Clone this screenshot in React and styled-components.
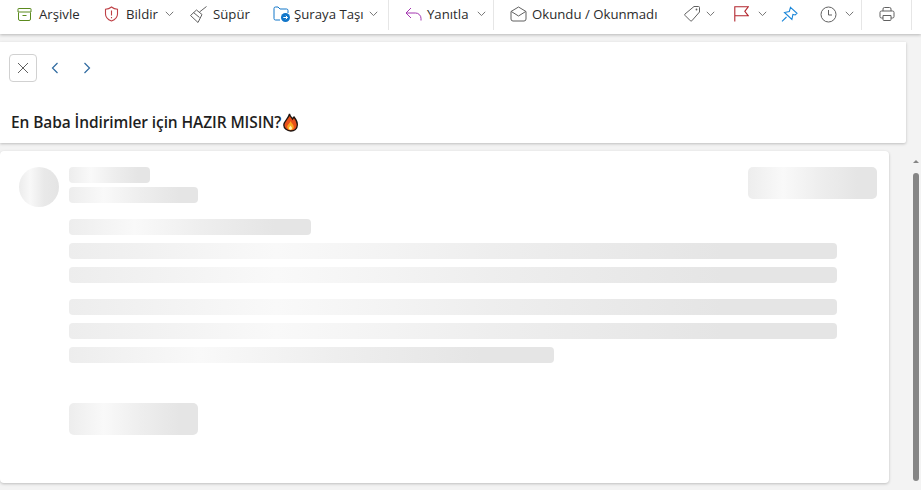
import React from 'react';
import styled, { createGlobalStyle } from 'styled-components';

const Global = createGlobalStyle`
  html, body { margin: 0; padding: 0; height: 100%; overflow: hidden; background: #f3f3f3; }
  body { font-family: "Open Sans", "Noto Sans", "Liberation Sans", sans-serif; color: #242424; }
`;
const Page = styled.div`
  width: 921px; height: 490px; display: flex; flex-direction: column; overflow: hidden; background: #f3f3f3;
`;
const Toolbar = styled.div`
  height: 34px; flex: none; background: #fff; display: flex; align-items: center;
  box-shadow: 0 1px 3px rgba(0,0,0,.25); position: relative; z-index: 2; padding-left: 17px;
`;
const Item = styled.div`
  display: flex; align-items: center; flex: none; margin-left: ${p => p.$ml || 0}px; gap: ${p => p.$gap ?? 6}px;
  font-size: 13.2px; height: 30px; white-space: nowrap; margin-top: -6px; color: #2b2b2b;
  svg { display: block; flex: none; }
`;
const Label = styled.span`width: ${p => p.$w}px; display: block; line-height: 30px;`;
const Sep = styled.div`width: 1px; height: 30px; background: #e6e6e6; flex: none; margin-left: ${p => p.$ml}px; margin-top: -4px;`;
const Chev = styled.svg.attrs({ viewBox: '0 0 9 6', width: 9, height: 6 })`
  margin-left: ${p => p.$ml ?? 2}px; fill: none; stroke: #777; stroke-width: 1;
`;
const Chevron = ({ ml }) => <Chev $ml={ml}><path d="M.8.8 4.500 4.600 8.200.8" /></Chev>;

const Body = styled.div`flex: 1; display: flex; flex-direction: column; min-height: 0; padding-top: 8px; position: relative;`;
const SubjectCard = styled.div`
  width: 906px; height: 101px; flex: none; background: #fff; box-shadow: 0 1px 3px rgba(0,0,0,.22);
  border-bottom-right-radius: 2px; display: flex; flex-direction: column; padding: 12px 0 0 9px; box-sizing: border-box;
`;
const NavRow = styled.div`display: flex; align-items: center;`;
const CloseBtn = styled.div`
  width: 28px; height: 28px; box-sizing: border-box; border: 1px solid #d1d1d1; border-radius: 4px;
  display: flex; align-items: center; justify-content: center; background: #fff;
`;
const NavBtn = styled.div`width: 32px; height: 28px; display: flex; align-items: center; justify-content: center; margin-left: ${p => p.$ml || 0}px;`;
const Subject = styled.div`
  margin: 28px 0 0 2px; font-size: 15.5px; font-weight: 600; color: #1f1f1f; line-height: 24px; display: flex; align-items: center; letter-spacing: -.1px;
  svg { display: block; margin-left: 2px; }
`;
const MessageCard = styled.div`
  width: 889px; height: 332px; flex: none; margin-top: 8px; background: #fff; border-radius: 4px;
  box-shadow: 0 1px 3px rgba(0,0,0,.22); box-sizing: border-box; padding: 16px 12px 0 19px; display: flex; gap: 10px;
`;
const Avatar = styled.div`
  width: 40px; height: 40px; border-radius: 50%; flex: none;
  background: linear-gradient(90deg, #ececec 0%, #f8f8f8 28%, #e9e9e9 62%, #e4e4e4 100%);
`;
const Main = styled.div`flex: 1; display: flex; flex-direction: column; min-width: 0;`;
const Head = styled.div`display: flex; justify-content: space-between; align-items: flex-start;`;
const Names = styled.div`display: flex; flex-direction: column; gap: 4px;`;
const Bone = styled.div`
  width: ${p => p.$w}px; height: ${p => p.$h || 16}px; margin-top: ${p => p.$mt || 0}px; border-radius: ${p => p.$r || 4}px; flex: none;
  background: linear-gradient(90deg, #ededed 0%, #f9f9f9 27%, #eeeeee 55%, #e5e5e5 85%, #e5e5e5 100%);
`;
const Track = styled.div`position: absolute; right: 1px; top: 0; bottom: 0; width: 7px;`;
const Thumb = styled.div`position: absolute; top: 139px; left: 0; width: 6px; height: 308px; background: #858585; border-radius: 3px;`;
const Arrow = styled.div`
  position: absolute; top: 126px; left: 0; width: 0; height: 0;
  border-left: 3px solid transparent; border-right: 3px solid transparent; border-bottom: 3px solid #858585;
`;

const Icon = ({ children, w = 18, h = 18 }) => (
  <svg width={w} height={h} viewBox={`0 0 ${w} ${h}`} fill="none">{children}</svg>
);

export default function App() {
  return (
    <Page>
      <Global />
      <Toolbar>
        <Item $gap={7}>
          <Icon w={15} h={15}><path d="M1.500 5.500v6.500a1.500 1.500 0 0 0 1.500 1.500h9a1.500 1.500 0 0 0 1.500-1.500V5.500M1.500 1.500h12a.5.5 0 0 1 .5.5v3H1V2a.5.5 0 0 1 .5-.5ZM5.500 8.500h4" stroke="#5b8a1e" /></Icon>
          <Label $w={41}>Arşivle</Label>
        </Item>
        <Item $ml={24} $gap={7}>
          <Icon w={15} h={16}><path d="M7.500 1C5.700 2.500 3.700 3.200 1.500 3.300V8c0 3.200 2.100 5.500 6 7 3.900-1.500 6-3.800 6-7V3.300C11.300 3.200 9.300 2.500 7.500 1Z" stroke="#bf4046" strokeWidth="1.100" /><path d="M7.500 4.500v5M7.500 11v1.200" stroke="#bf4046" strokeWidth="1.100" /></Icon>
          <Label $w={32}>Bildir</Label>
          <Chevron ml={0} />
        </Item>
        <Item $ml={16} $gap={6}>
          <Icon w={17} h={17}><path d="M16.500.5 9.500 6M6.500 4 12 8.500 8 16.500.5 9.500 6.500 4ZM3.500 6.500l6 5" stroke="#616161" /></Icon>
          <Label $w={36}>Süpür</Label>
        </Item>
        <Item $ml={24} $gap={3}>
          <Icon w={18} h={16}><path d="M7 14H2.500A1.500 1.500 0 0 1 1 12.500v-10A1.500 1.500 0 0 1 2.500 1H5l2 2h6.500A1.500 1.500 0 0 1 15 4.500V7" stroke="#1176c9" /><circle cx="12.500" cy="11.500" r="4.500" fill="#1176c9" /><path d="M10.300 11.500h4.200M12.800 9.800l1.700 1.700-1.700 1.700" stroke="#fff" /></Icon>
          <Label $w={71}>Şuraya Taşı</Label>
          <Chevron ml={1} />
        </Item>
        <Sep $ml={10} />
        <Item $ml={16} $gap={5}>
          <Icon w={17} h={14}><path d="M6 1 1 6l5 5M1 6h9.500A5.500 5.500 0 0 1 16 11.500V13.500" stroke="#a335b0" /></Icon>
          <Label $w={41}>Yanıtla</Label>
          <Chevron ml={4} />
        </Item>
        <Sep $ml={7} />
        <Item $ml={16} $gap={5}>
          <Icon w={17} h={16}><path d="M8.500 1 1 5.500v7.500A2 2 0 0 0 3 15h11a2 2 0 0 0 2-2V5.500L8.500 1ZM1.300 5.500l7.200 4.500 7.200-4.500" stroke="#616161" /></Icon>
          <Label $w={129}>Okundu / Okunmadı</Label>
        </Item>
        <Item $ml={22} $gap={3}>
          <Icon w={18} h={18}><path d="M11 1.500h4.500a1 1 0 0 1 1 1V7L8.800 15.800a1 1 0 0 1-1.400 0L2 10.400a1 1 0 0 1 0-1.400L11 1.500Z" stroke="#616161" /><circle cx="13.500" cy="4.500" r=".9" fill="#616161" /></Icon>
          <Chevron ml={2} />
        </Item>
        <Item $ml={19} $gap={5}>
          <Icon w={15} h={16}><path d="M.8 15.500V.8h13.500l-3.500 4.500 3.500 4.500H.8" stroke="#b3262e" strokeWidth="1.100" /></Icon>
          <Chevron ml={4} />
        </Item>
        <Item $ml={14}>
          <Icon w={17} h={16}><path d="M9.500 1.300 16 7.300 14.200 9l-2.300-.5-1 5L3.500 6.500l4.800-1L9.500 1.300ZM5.500 11 1 15.300" stroke="#1a86d9" strokeWidth="1.100" /></Icon>
        </Item>
        <Item $ml={22} $gap={8}>
          <Icon w={17} h={17}><circle cx="8.500" cy="8.500" r="7.500" stroke="#616161" /><path d="M8.500 4v5h3.500" stroke="#616161" /></Icon>
          <Chevron ml={0} />
        </Item>
        <Sep $ml={7} />
        <Item $ml={17}>
          <Icon w={16} h={16}><path d="M4 5V3a1.500 1.500 0 0 1 1.500-1.500h5A1.500 1.500 0 0 1 12 3v2M4 12H2.500A1.500 1.500 0 0 1 1 10.500v-4A1.500 1.500 0 0 1 2.500 5h11A1.500 1.500 0 0 1 15 6.500v4a1.500 1.500 0 0 1-1.500 1.500H12M4 9.500h8v4a1 1 0 0 1-1 1H5a1 1 0 0 1-1-1v-4Z" stroke="#616161" /></Icon>
        </Item>
        <Sep $ml={16} />
      </Toolbar>
      <Body>
        <SubjectCard>
          <NavRow>
            <CloseBtn>
              <Icon w={12} h={12}><path d="m1 1 10 10M11 1 1 11" stroke="#616161" /></Icon>
            </CloseBtn>
            <NavBtn $ml={2}><Icon w={8} h={12}><path d="M6.500 1 1.500 6l5 5" stroke="#2f6aa0" strokeWidth="1.200" /></Icon></NavBtn>
            <NavBtn><Icon w={8} h={12}><path d="m1.500 1 5 5-5 5" stroke="#2f6aa0" strokeWidth="1.200" /></Icon></NavBtn>
          </NavRow>
          <Subject>
            En Baba İndirimler için HAZIR MISIN?
            <Icon w={15} h={19}>
              <path d="M6.500 1c.5 2.500 2 3 3 5 .5-1 1-1.500 1.500-2 2 2.500 3.500 5 3.300 8 0 3.800-3 6-6.500 6S.8 15.500.8 12C.8 8 5.500 6 6.500 1Z" fill="#e8501b" stroke="#1c1410" strokeWidth="1.300" />
              <path d="M7.500 8c.5 1.800 3.300 3.500 3.300 6 0 1.900-1.600 3-3.300 3s-3.300-1.100-3.300-3c0-2.500 2.800-3.500 3.300-6Z" fill="#fba61f" />
              <path d="M7.500 12.500c.4 1 1.500 1.500 1.500 2.700 0 .9-.7 1.500-1.500 1.500S6 16.100 6 15.200c0-1.200 1.100-1.700 1.500-2.700Z" fill="#fff3b0" />
            </Icon>
          </Subject>
        </SubjectCard>
        <MessageCard>
          <Avatar />
          <Main>
            <Head>
              <Names>
                <Bone $w={81} />
                <Bone $w={129} />
              </Names>
              <Bone $w={129} $h={32} $r={5} />
            </Head>
            <Bone $w={242} $mt={16} />
            <Bone $w={768} $mt={8} />
            <Bone $w={768} $mt={8} />
            <Bone $w={768} $mt={16} />
            <Bone $w={768} $mt={8} />
            <Bone $w={485} $mt={8} />
            <Bone $w={129} $h={32} $r={5} $mt={40} />
          </Main>
        </MessageCard>
        <Track>
          <Arrow />
          <Thumb />
        </Track>
      </Body>
    </Page>
  );
}
